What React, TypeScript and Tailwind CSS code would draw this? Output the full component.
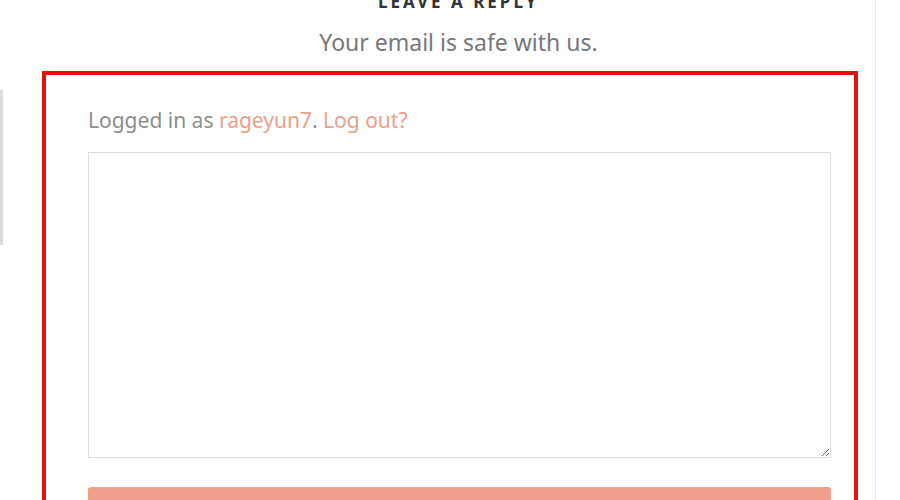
import React from "react";

export default function App() {
  return (
    <div className="w-[900px] h-[500px] overflow-hidden bg-white flex" style={{ fontFamily: '"Noto Sans", "Open Sans", sans-serif' }}>
      <div className="w-[42px] shrink-0">
        <div className="mt-[90px] h-[155px] w-[3px] bg-[#dcdcdc]" />
      </div>
      <div className="w-[833px] shrink-0 flex flex-col">
        <div className="text-center">
          <div className="-mt-[7px] h-[17px] text-[17px] leading-[17px] font-bold tracking-[3px] text-[#333]">LEAVE A REPLY</div>
          <div className="mt-[17px] text-[23px] leading-[30px] text-[#777]">Your email is safe with us.</div>
        </div>
        <div className="mt-[14px] w-[816px] border-4 border-[#e40f0f] pl-[42px] pr-[23px] pt-[31px] pb-[20px]">
          <p className="text-[21px] leading-[28px] text-[#8e8e8e]">
            Logged in as <a className="text-[#e9a08c]">rageyun7</a>. <a className="text-[#e9a08c]">Log out?</a>
          </p>
          <textarea className="mt-[18px] block w-[743px] h-[306px] border border-[#dcdcdc] bg-white outline-none" />
          <div className="mt-[29px] h-[40px] w-[743px] rounded-[3px] bg-[#f0a08b]" />
        </div>
      </div>
      <div className="w-[25px] border-l border-[#eeeeee]" />
    </div>
  );
}
